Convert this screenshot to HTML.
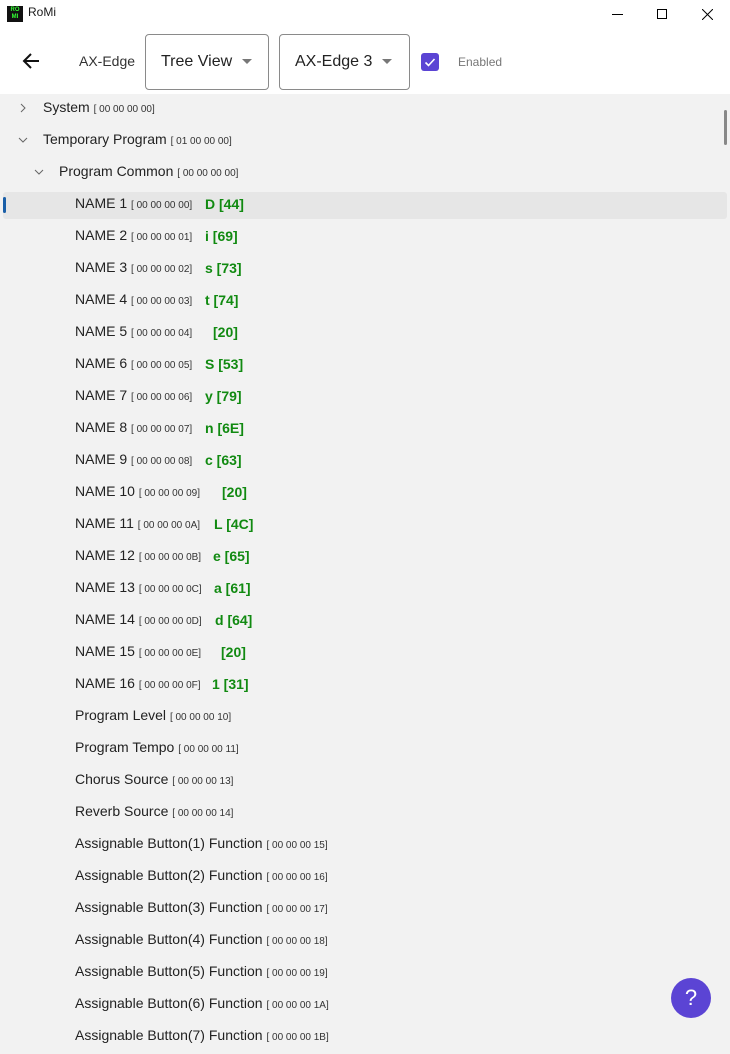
<!DOCTYPE html>
<html><head><meta charset="utf-8"><style>
*{margin:0;padding:0;box-sizing:border-box}
body{width:730px;height:1036px;overflow:hidden;background:#f2f2f2;font-family:"Liberation Sans",sans-serif;color:#1a1a1a;position:relative}
.hdr{position:absolute;left:0;top:0;width:730px;height:94px;background:#fff}
.row{position:absolute;height:32px;line-height:32px;font-size:14px;white-space:nowrap;color:#222}
.b{font-size:10px;color:#333}
.g{position:absolute;font-size:14px;font-weight:bold;color:#118a11;line-height:32px;white-space:pre}
.dd{position:absolute;top:34px;height:56px;border:1px solid #8a8a8a;border-radius:4px;font-size:16px;line-height:54px;color:#222}
.tri{display:inline-block;width:0;height:0;border-left:5px solid transparent;border-right:5px solid transparent;border-top:5px solid #777;vertical-align:middle;margin-left:10px}
</style></head><body>
<div class="hdr">
  <div style="position:absolute;left:7px;top:6px;width:16px;height:16px;background:#111;color:#3f3;font-size:6px;line-height:7px;text-align:center;font-weight:bold;padding-top:1px">RO<br>MI</div>
  <div style="position:absolute;left:28px;top:5px;font-size:12px">RoMi</div>
  <div style="position:absolute;left:612px;top:14px;width:11px;height:1px;background:#000"></div>
  <div style="position:absolute;left:657px;top:9px;width:10px;height:10px;border:1px solid #000"></div>
  <svg style="position:absolute;left:702px;top:9px" width="11" height="11"><path d="M0 0L11 11M11 0L0 11" stroke="#000" stroke-width="1"/></svg>
  <svg style="position:absolute;left:22px;top:53px" width="18" height="16"><path d="M17 8H2M9 1L2 8L9 15" stroke="#111" stroke-width="2" fill="none"/></svg>
  <div style="position:absolute;left:79px;top:53px;font-size:14px;color:#333">AX-Edge</div>
  <div class="dd" style="left:145px;width:124px;padding-left:15px">Tree View<span class="tri"></span></div>
  <div class="dd" style="left:279px;width:131px;padding-left:15px">AX-Edge 3<span class="tri"></span></div>
  <div style="position:absolute;left:421px;top:53px;width:18px;height:18px;background:#5b44d4;border-radius:3px"><svg width="18" height="18"><path d="M4.5 9.5L7.5 12.5L13.5 6" stroke="#fff" stroke-width="1.6" fill="none"/></svg></div>
  <div style="position:absolute;left:458px;top:55px;font-size:12px;color:#777">Enabled</div>
</div>
<div style="position:absolute;left:3px;top:192px;width:724px;height:27px;background:#e6e6e6;border-radius:3px"></div>
<div style="position:absolute;left:3px;top:197px;width:3px;height:16px;background:#1a5fa8;border-radius:2px"></div>
<div style="position:absolute;left:724px;top:110px;width:3px;height:35px;background:#888;border-radius:2px"></div>
<svg style="position:absolute;left:20px;top:103px" width="6" height="10"><path d="M1 1L5 5L1 9" stroke="#666" fill="none"/></svg>
<svg style="position:absolute;left:18px;top:137px" width="10" height="6"><path d="M1 1L5 5L9 1" stroke="#666" fill="none"/></svg>
<svg style="position:absolute;left:34px;top:169px" width="10" height="6"><path d="M1 1L5 5L9 1" stroke="#666" fill="none"/></svg>
<div class="row" style="left:43px;top:91px">System <span class="b">[ 00 00 00 00]</span></div>
<div class="row" style="left:43px;top:123px">Temporary Program <span class="b">[ 01 00 00 00]</span></div>
<div class="row" style="left:59px;top:155px">Program Common <span class="b">[ 00 00 00 00]</span></div>
<div class="row" style="left:75px;top:187px">NAME 1 <span class="b">[ 00 00 00 00]</span></div><div class="g" style="left:205px;top:188px">D [44]</div>
<div class="row" style="left:75px;top:219px">NAME 2 <span class="b">[ 00 00 00 01]</span></div><div class="g" style="left:205px;top:220px">i [69]</div>
<div class="row" style="left:75px;top:251px">NAME 3 <span class="b">[ 00 00 00 02]</span></div><div class="g" style="left:205px;top:252px">s [73]</div>
<div class="row" style="left:75px;top:283px">NAME 4 <span class="b">[ 00 00 00 03]</span></div><div class="g" style="left:205px;top:284px">t [74]</div>
<div class="row" style="left:75px;top:315px">NAME 5 <span class="b">[ 00 00 00 04]</span></div><div class="g" style="left:213px;top:316px">[20]</div>
<div class="row" style="left:75px;top:347px">NAME 6 <span class="b">[ 00 00 00 05]</span></div><div class="g" style="left:205px;top:348px">S [53]</div>
<div class="row" style="left:75px;top:379px">NAME 7 <span class="b">[ 00 00 00 06]</span></div><div class="g" style="left:205px;top:380px">y [79]</div>
<div class="row" style="left:75px;top:411px">NAME 8 <span class="b">[ 00 00 00 07]</span></div><div class="g" style="left:205px;top:412px">n [6E]</div>
<div class="row" style="left:75px;top:443px">NAME 9 <span class="b">[ 00 00 00 08]</span></div><div class="g" style="left:205px;top:444px">c [63]</div>
<div class="row" style="left:75px;top:475px">NAME 10 <span class="b">[ 00 00 00 09]</span></div><div class="g" style="left:222px;top:476px">[20]</div>
<div class="row" style="left:75px;top:507px">NAME 11 <span class="b">[ 00 00 00 0A]</span></div><div class="g" style="left:214px;top:508px">L [4C]</div>
<div class="row" style="left:75px;top:539px">NAME 12 <span class="b">[ 00 00 00 0B]</span></div><div class="g" style="left:213px;top:540px">e [65]</div>
<div class="row" style="left:75px;top:571px">NAME 13 <span class="b">[ 00 00 00 0C]</span></div><div class="g" style="left:214px;top:572px">a [61]</div>
<div class="row" style="left:75px;top:603px">NAME 14 <span class="b">[ 00 00 00 0D]</span></div><div class="g" style="left:215px;top:604px">d [64]</div>
<div class="row" style="left:75px;top:635px">NAME 15 <span class="b">[ 00 00 00 0E]</span></div><div class="g" style="left:221px;top:636px">[20]</div>
<div class="row" style="left:75px;top:667px">NAME 16 <span class="b">[ 00 00 00 0F]</span></div><div class="g" style="left:212px;top:668px">1 [31]</div>
<div class="row" style="left:75px;top:699px">Program Level <span class="b">[ 00 00 00 10]</span></div>
<div class="row" style="left:75px;top:731px">Program Tempo <span class="b">[ 00 00 00 11]</span></div>
<div class="row" style="left:75px;top:763px">Chorus Source <span class="b">[ 00 00 00 13]</span></div>
<div class="row" style="left:75px;top:795px">Reverb Source <span class="b">[ 00 00 00 14]</span></div>
<div class="row" style="left:75px;top:827px">Assignable Button(1) Function <span class="b">[ 00 00 00 15]</span></div>
<div class="row" style="left:75px;top:859px">Assignable Button(2) Function <span class="b">[ 00 00 00 16]</span></div>
<div class="row" style="left:75px;top:891px">Assignable Button(3) Function <span class="b">[ 00 00 00 17]</span></div>
<div class="row" style="left:75px;top:923px">Assignable Button(4) Function <span class="b">[ 00 00 00 18]</span></div>
<div class="row" style="left:75px;top:955px">Assignable Button(5) Function <span class="b">[ 00 00 00 19]</span></div>
<div class="row" style="left:75px;top:987px">Assignable Button(6) Function <span class="b">[ 00 00 00 1A]</span></div>
<div class="row" style="left:75px;top:1019px">Assignable Button(7) Function <span class="b">[ 00 00 00 1B]</span></div>
<div style="position:absolute;left:671px;top:978px;width:40px;height:40px;border-radius:50%;background:#5b44d4;color:#fff;font-size:22px;line-height:40px;text-align:center">?</div>
</body></html>
